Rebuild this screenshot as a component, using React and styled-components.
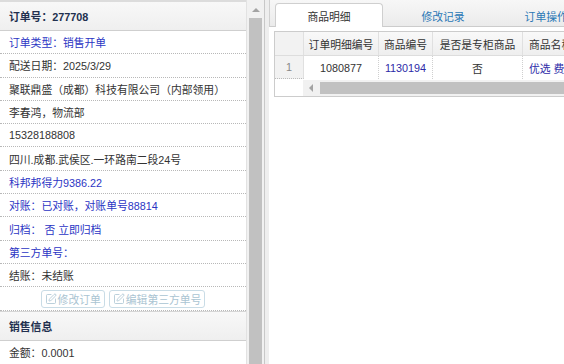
import styled, { createGlobalStyle } from "styled-components";
import { SquarePen } from "lucide-react";

const GlobalStyle = createGlobalStyle`
  body {
    margin: 0;
    font-family: "Liberation Sans", "Noto Sans CJK SC", sans-serif;
    font-size: 10.8px;
    color: #333;
    background: #fff;
  }
`;

const Page = styled.div`
  display: flex;
  width: 564px;
  height: 364px;
  overflow: hidden;
`;

const LeftPanel = styled.div`
  display: flex;
  width: 264px;
  flex-shrink: 0;
`;

const InfoList = styled.div`
  width: 247px;
  display: flex;
  flex-direction: column;
`;

const SectionTitle = styled.div`
  height: 28px;
  display: flex;
  align-items: center;
  padding: 0 9px;
  font-weight: bold;
  color: #22304f;
  background: linear-gradient(#f8f8f8, #efefef);
  border-top: ${({ top }) => (top ? "2px solid #dcdcdc" : "1px solid #d6d6d6")};
  border-bottom: 1px solid #cfcfcf;
  flex-shrink: 0;
`;

const InfoRow = styled.div`
  height: 22.3px;
  display: flex;
  align-items: center;
  padding: 0 9px;
  color: ${({ link }) => (link ? "#2b35c4" : "#333")};
  border-bottom: ${({ last }) => (last ? "none" : "1px dotted #b8b8b8")};
  white-space: nowrap;
  flex-shrink: 0;
`;

const ButtonRow = styled.div`
  height: 23px;
  display: flex;
  align-items: center;
  justify-content: center;
  gap: 4px;
  border-bottom: 1px dotted #b8b8b8;
  flex-shrink: 0;
`;

const GhostButton = styled.button`
  display: flex;
  align-items: center;
  gap: 1px;
  height: 18px;
  padding: 0 3px;
  font: inherit;
  color: #aac4d2;
  background: #fff;
  border: 1px solid #c9dce6;
  border-radius: 3px;
`;

const ScrollTrack = styled.div`
  width: 17px;
  flex-shrink: 0;
  display: flex;
  flex-direction: column;
  align-items: center;
  background: #f1f1f1;
  border-left: 1px solid #e2e2e2;
`;

const UpArrow = styled.div`
  margin-top: 8px;
  width: 0;
  height: 0;
  border-left: 4px solid transparent;
  border-right: 4px solid transparent;
  border-bottom: 4px solid #a3a3a3;
`;

const VThumb = styled.div`
  margin-top: 6px;
  width: 13px;
  flex: 1;
  background: #c1c1c1;
`;

const RightPanel = styled.div`
  flex: 1;
  min-width: 0;
  border-left: 1px solid #c8c8c8;
  background: #eee;
  padding-left: 4px;
  display: flex;
`;

const RightInner = styled.div`
  flex: 1;
  min-width: 0;
  background: #fff;
  display: flex;
  flex-direction: column;
`;

const TabBar = styled.div`
  height: 23px;
  padding: 3px 0 0 5px;
  display: flex;
  gap: 6px;
  background: linear-gradient(#f7f7f7, #ebebeb);
  border-left: 1px solid #d0d0d0;
  border-bottom: 1px solid #cccccc;
  flex-shrink: 0;
`;

const Tab = styled.div`
  width: 106px;
  flex-shrink: 0;
  display: flex;
  align-items: center;
  justify-content: center;
  color: ${({ active }) => (active ? "#333" : "#2a78b6")};
  background: ${({ active }) => (active ? "#fff" : "transparent")};
  border: 1px solid ${({ active }) => (active ? "#cfcfcf" : "transparent")};
  border-bottom: none;
  border-radius: 4px 4px 0 0;
  margin-bottom: -1px;
  white-space: nowrap;
`;

const Grid = styled.div`
  margin: 4px 0 0 5px;
  border: 1px solid #cccccc;
  border-right: none;
  display: flex;
  flex-direction: column;
  overflow: hidden;
`;

const GridRow = styled.div`
  display: flex;
  height: 23px;
  background: ${({ head }) => (head ? "linear-gradient(#f9f9f9, #eeeeee)" : "#fff")};
  border-bottom: 1px solid ${({ head }) => (head ? "#dddddd" : "#fff")};
`;

const Cell = styled.div`
  width: ${({ w }) => w}px;
  flex-shrink: 0;
  display: flex;
  align-items: center;
  justify-content: ${({ left }) => (left ? "flex-start" : "center")};
  padding-left: ${({ left }) => (left ? "6px" : "0")};
  box-sizing: border-box;
  color: ${({ link }) => (link ? "#2c2aa8" : "#333")};
  border-right: 1px ${({ dotted }) => (dotted ? "dotted #cfcfcf" : "solid #e0e0e0")};
  white-space: nowrap;
  overflow: hidden;
`;

const RowNum = styled.div`
  width: 28px;
  flex-shrink: 0;
  display: flex;
  align-items: center;
  justify-content: center;
  color: #888;
  background: #f2f2f2;
  border-right: 1px solid #e0e0e0;
  border-bottom: ${({ dotted }) => (dotted ? "1px dotted #bbb" : "none")};
`;

const ScrollRow = styled.div`
  display: flex;
  height: 16px;
`;

const Corner = styled.div`
  width: 28px;
  flex-shrink: 0;
  background: #fff;
`;

const HTrack = styled.div`
  flex: 1;
  display: flex;
  align-items: center;
  background: #f1f1f1;
`;

const LeftArrow = styled.div`
  margin: 0 7px 0 6px;
  width: 0;
  height: 0;
  border-top: 4px solid transparent;
  border-bottom: 4px solid transparent;
  border-right: 4px solid #a3a3a3;
`;

const HThumb = styled.div`
  flex: 1;
  height: 12px;
  background: #c1c1c1;
`;

const rows = [
  { text: "订单类型：销售开单", link: true },
  { text: "配送日期：2025/3/29" },
  { text: "聚联鼎盛（成都）科技有限公司（内部领用）" },
  { text: "李春鸿，物流部" },
  { text: "15328188808" },
  { text: "四川.成都.武侯区.一环路南二段24号" },
  { text: "科邦邦得力9386.22", link: true },
  { text: "对账：已对账，对账单号88814", link: true },
  { text: "归档： 否 立即归档", link: true },
  { text: "第三方单号：", link: true },
  { text: "结账：未结账" },
];

const App = () => {
  return (
    <Page>
      <GlobalStyle />
      <LeftPanel>
        <InfoList>
          <SectionTitle top>订单号：277708</SectionTitle>
          {rows.map((r) => (
            <InfoRow key={r.text} link={r.link}>
              {r.text}
            </InfoRow>
          ))}
          <ButtonRow>
            <GhostButton>
              <SquarePen size={12} strokeWidth={1.6} />
              修改订单
            </GhostButton>
            <GhostButton>
              <SquarePen size={12} strokeWidth={1.6} />
              编辑第三方单号
            </GhostButton>
          </ButtonRow>
          <SectionTitle>销售信息</SectionTitle>
          <InfoRow last>金额：0.0001</InfoRow>
        </InfoList>
        <ScrollTrack>
          <UpArrow />
          <VThumb />
        </ScrollTrack>
      </LeftPanel>
      <RightPanel>
        <RightInner>
          <TabBar>
            <Tab active>商品明细</Tab>
            <Tab>修改记录</Tab>
            <Tab>订单操作记录</Tab>
          </TabBar>
          <Grid>
            <GridRow head>
              <RowNum />
              <Cell w={75}>订单明细编号</Cell>
              <Cell w={54}>商品编号</Cell>
              <Cell w={90}>是否是专柜商品</Cell>
              <Cell w={120} left>商品名称</Cell>
            </GridRow>
            <GridRow>
              <RowNum dotted>1</RowNum>
              <Cell w={75} dotted>1080877</Cell>
              <Cell w={54} dotted link>1130194</Cell>
              <Cell w={90} dotted>否</Cell>
              <Cell w={120} dotted left link>优选 费用</Cell>
            </GridRow>
            <ScrollRow>
              <Corner />
              <HTrack>
                <LeftArrow />
                <HThumb />
              </HTrack>
            </ScrollRow>
          </Grid>
        </RightInner>
      </RightPanel>
    </Page>
  );
};

export default App;
